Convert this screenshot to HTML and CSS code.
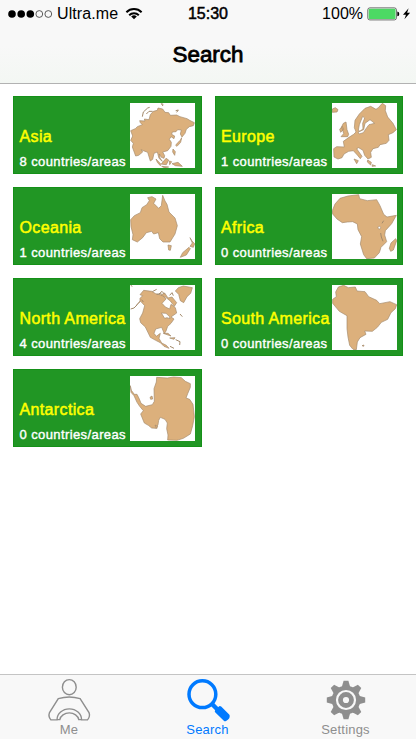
FILE: index.html
```html
<!DOCTYPE html>
<html lang="en">
<head>
<meta charset="utf-8">
<title>Search</title>
<link rel="stylesheet" href="styles.css">
</head>
<body>
<div class="app">
  <header class="top">
    <div class="status">
      <div class="carrier">
        <svg class="signal" width="45" height="10" viewBox="0 0 45 10"><circle cx="4" cy="5" r="3.8"/><circle cx="13.2" cy="5" r="3.8"/><circle cx="22.3" cy="5" r="3.8"/><circle class="off" cx="31.3" cy="5" r="3.4"/><circle class="off" cx="40.3" cy="5" r="3.4"/></svg>
        <span>Ultra.me</span>
        <svg class="wifi" width="18" height="13" viewBox="0 0 18 13"><path d="M1.4 5.2a10.8 10.8 0 0 1 15.2 0M4.2 8.2a6.8 6.8 0 0 1 9.6 0"/><path class="solid" d="M9 12.2 6.2 9.5a4 4 0 0 1 5.6 0z"/></svg>
      </div>
      <div class="clock">15:30</div>
      <div class="power">
        <span>100%</span>
        <svg width="44" height="14" viewBox="0 0 44 14"><rect x=".8" y=".9" width="28.6" height="12" rx="2" fill="#fff" stroke="#444" stroke-width=".8"/><rect x="1.7" y="1.8" width="26.8" height="10.2" rx="1" fill="#4cd964"/><path d="M30.3 4.6q2 .2 2 2.3t-2 2.3z"/><path d="M41.6 1.2 36 7.8h3l-1.6 4.5 5.7-6.5h-3z"/></svg>
      </div>
    </div>
    <h1>Search</h1>
  </header>

  <main class="grid">
    <a class="card">
      <div class="text"><h2>Asia</h2><p>8 countries/areas</p></div>
      <svg class="map" viewBox="0 0 195 195"><path d="M2 83 16 77 22 71 37 65 31 59 29 53 45 54 43 48 57 50 61 35 70 25 82 22 84 15 98 18 105 28 116 29 121 37 140 36 150 41 171 47 179 52 193 59 190 68 178 71 169 79 165 91 156 102 151 93 154 81 143 80 138 86 127 87 125 94 134 99 132 107 123 101 118 109 124 118 123 130 113 143 98 147 104 158 102 166 94 163 88 153 90 165 97 175 87 166 82 147 72 151 68 169 61 174 53 148 40 143 33 140 38 147 26 157 17 159 7 132 10 121 2 112 8 99z"/><path class="line" d="M37 41 40 27 53 15 59 13M49 33 57 25 68 25M99 9 94 2 100 4M137 23 145 21 140 28"/><path d="M143 119 151 112 155 104 152 118 141 130 137 127zM129 138 136 146 134 157 128 147zM78 168 93 184 91 188 82 178zM94 183 108 166 116 171 109 185 98 184zM118 174 125 176 119 185zM126 182 144 178 157 190 136 188zM95 190 116 192 103 194z"/></svg>
    </a>
    <a class="card">
      <div class="text"><h2>Europe</h2><p>1 countries/areas</p></div>
      <svg class="map" viewBox="0 0 195 195"><path d="M67 74 69 52 82 33 99 16 116 10 132 19 139 14 151 1 161 8 160 23 167 42 183 61 193 80 183 89 169 95 171 112 163 121 144 125 139 133 123 137 116 148 118 163 108 168 98 157 93 142 80 134 74 137 90 160 85 167 76 156 64 143 50 145 36 153 30 164 18 168 6 162 5 137 14 131 37 132 34 115 51 103 65 94 72 87 69 79z"/><path d="M27 101 35 92 32 81 28 73 34 61 42 57 45 80 50 94 47 101zM23 79 31 70 35 79 26 88zM1 18 10 14 18 20 15 27 1 28zM66 168 79 173 74 182zM107 171 118 178 116 186 106 177zM121 185 131 189 120 190z"/><path class="water" d="M92 40 98 45 92 61 93 77 84 85 79 82 82 65zM99 61 114 50 128 61 111 65 104 74 94 89 82 93 78 87 95 80z"/></svg>
    </a>
    <a class="card">
      <div class="text"><h2>Oceania</h2><p>1 countries/areas</p></div>
      <svg class="map" viewBox="0 0 195 195"><path d="M2 77 13 65 31 56 36 41 50 32 58 20 53 11 66 8 78 15 71 28 86 43 94 35 98 4 105 21 111 31 117 54 135 72 142 95 135 120 120 144 99 144 89 134 85 116 71 120 65 112 49 116 38 131 22 144 7 137 9 122 3 98z"/><path d="M114 153 124 155 121 169 116 168zM151 190 158 176 177 160 181 164 169 183zM180 157 187 147 180 131 186 141 194 149 190 160z"/></svg>
    </a>
    <a class="card">
      <div class="text"><h2>Africa</h2><p>0 countries/areas</p></div>
      <svg class="map" viewBox="0 0 195 195"><path d="M2 60 1 50 9 30 24 13 48 6 80 2 83 14 106 20 134 17 144 35 155 61 165 69 193 64 179 89 160 110 158 123 164 143 147 160 142 176 127 192 104 194 95 182 85 150 89 128 78 107 76 90 62 83 46 84 31 86 15 75z"/><path d="M172 163 177 147 191 134 194 140 184 168 176 172z"/><circle class="water" cx="142" cy="101" r="4"/><path class="line" d="M150 88 155 80M146 117 148 129 153 142"/></svg>
    </a>
    <a class="card">
      <div class="text"><h2>North America</h2><p>4 countries/areas</p></div>
      <svg class="map" viewBox="0 0 195 195"><path d="M30 40 38 32 30 29 41 16 65 19 77 26 97 31 108 42 96 55 106 66 119 72 123 58 136 68 140 84 123 96 132 102 123 115 113 124 108 138 103 146 95 127 77 132 72 145 79 154 91 145 87 160 95 174 109 181 117 190 102 184 91 173 77 166 61 157 46 126 32 113 29 101 38 84 44 62 32 49 19 61 30 48z"/><path d="M93 30 104 24 114 39 126 36 140 53 133 64 121 48 107 37zM136 18 145 8 160 3 187 8 182 25 171 35 161 53 151 47 146 28zM100 145 114 145 123 153 108 148zM119 159 135 158 132 163z"/><path class="line" d="M2 1 7 4M2 72 12 69 22 59M87 27 96 19 104 28M119 31 126 23 130 32M67 20 80 13M80 28 94 26M35 44 40 51M97 88 107 96 117 99M150 87 157 95M137 164 150 170 149 180M120 184 132 190"/><path class="water" d="M94 84 108 85 118 94 120 101 111 98 104 100z"/></svg>
    </a>
    <a class="card">
      <div class="text"><h2>South America</h2><p>0 countries/areas</p></div>
      <svg class="map" viewBox="0 0 195 195"><path d="M11 21 19 6 35 1 49 8 70 6 75 18 99 20 110 35 134 46 143 56 174 50 194 59 190 71 177 83 167 103 148 112 136 127 121 139 98 138 102 148 84 158 76 171 73 194 63 193 53 181 48 156 45 131 45 92 22 79 2 55 2 43 13 35z"/><path d="M90 182 96 180 95 184z"/></svg>
    </a>
    <a class="card">
      <div class="text"><h2>Antarctica</h2><p>0 countries/areas</p></div>
      <svg class="map" viewBox="0 0 195 195"><path d="M1 29 4 43 13 55 21 55 28 69 33 82 47 91 67 86 73 76 72 38 79 18 80 4 112 6 131 3 154 5 166 16 181 23 181 34 173 53 168 66 179 70 189 85 193 122 188 149 181 174 160 187 141 193 113 192 114 177 110 158 112 141 105 130 91 124 86 133 84 146 78 157 65 156 55 148 43 141 38 129 32 114 40 104 29 91 21 79 12 59 3 49z"/><path d="M60 64 66 60 68 69 62 70zM75 147 83 151 80 158z"/></svg>
    </a>
  </main>

  <nav class="tabs">
    <a class="tab">
      <svg width="44" height="44" viewBox="0 0 44 44" fill="none" stroke="#8e8e8e" stroke-width="1.4"><ellipse cx="22.3" cy="9.2" rx="6.9" ry="7.6"/><path d="M11.3 20.7q11-3.5 21.8 0L42 34.6q1.5 3.5-1.5 7.3h-5.9a12 10.8 0 0 0-24.6 0H4q-3-3-1.5-7.3zM34.4 41.6h-2.6a9.6 7.8 0 0 0-19 0h-2.6"/></svg>
      <span>Me</span>
    </a>
    <a class="tab active">
      <svg width="44" height="44" viewBox="0 0 44 44" fill="none" stroke="#007aff"><circle cx="16.4" cy="16.2" r="13.4" stroke-width="3.5"/><path d="m26 26 6 6" stroke-width="4.4"/><path d="m30.6 33.2 3.3-3.3 8 7.9q.4 1.8-2.8 3.7z" fill="#007aff" stroke-width="3.6" stroke-linejoin="round"/></svg>
      <span>Search</span>
    </a>
    <a class="tab">
      <svg width="44" height="44" viewBox="-22 -22 44 44" fill="#8e8e8e"><g id="teeth"><path id="tooth" d="m-4.2-13 1.8-6.2h4.8L4.2-13v26l-1.8 6.2h-4.8L-4.2 13z"/><use href="#tooth" transform="rotate(45)"/></g><use href="#teeth" transform="rotate(90)"/><circle r="14.3"/><circle r="9" fill="none" stroke="#f8f8f8" stroke-width="2.2"/><circle r="3.1" fill="#f8f8f8"/></svg>
      <span>Settings</span>
    </a>
  </nav>
</div>
</body>
</html>
```
FILE: styles.css
```css
* { box-sizing: border-box; }
body { margin: 0; background: #fff; font-family: "Liberation Sans", Arial, sans-serif; color: #000; }
h1, h2, p { margin: 0; font-weight: 400; }
svg { display: block; flex: none; }
.app { height: 739px; display: flex; flex-direction: column; }
.top { height: 84px; border-bottom: 1px solid #b2b2b2; background: linear-gradient(#f8f8f8 55%, #f3f7f3); }
.status { height: 28px; padding: 0 5px 0 8px; display: grid; grid-template-columns: 1fr auto 1fr; align-items: center; font-size: 16px; line-height: 28px; }
.carrier, .power { display: flex; align-items: center; }
.carrier span { margin-left: 4px; letter-spacing: .1px; }
.off { fill: none; stroke: #333; stroke-width: .8; }
.wifi { margin-left: 7px; margin-top: -2px; }
.wifi path { fill: none; stroke: #000; stroke-width: 2; }
.wifi .solid { fill: #000; stroke: none; }
.clock { -webkit-text-stroke: .5px #000; margin-right: 3px; }
.power { justify-content: flex-end; gap: 4px; }
h1 { text-align: center; font-size: 22.4px; line-height: 54px; -webkit-text-stroke: .8px #000; }
.grid { flex: 1; padding: 12px 13px; display: grid; grid-template-columns: 188.5px 188.5px; grid-auto-rows: 78px; gap: 13px; align-content: start; }
.card { background: #219624; border: 1px solid #159018; padding: 6px 5.5px; display: flex; justify-content: space-between; color: #fff; white-space: nowrap; }
.text { width: 110px; padding-top: 23px; }
h2 { font-size: 16px; line-height: 22px; letter-spacing: .36px; color: #ff0; -webkit-text-stroke: .5px #ff0; }
.card p { font-size: 13px; line-height: 16px; margin-top: 6px; letter-spacing: .4px; -webkit-text-stroke: .4px #fff; }
.map { width: 65px; height: 65px; background: #fff; fill: #dcb07c; stroke: #a38a6b; stroke-width: 2; stroke-linejoin: round; }
.map .line { fill: none; stroke-width: 3; }
.map .water { fill: #fff; }
.tabs { height: 65px; border-top: 1px solid #c4c4c4; background: #f8f8f8; display: grid; grid-template-columns: 138px 138px 138px; }
.tab { display: flex; flex-direction: column; align-items: center; color: #8e8e8e; font-size: 13px; line-height: 15px; }
.tab svg { margin-top: 3px; overflow: visible; }
.tab span { letter-spacing: .2px; }
.tab + .tab { padding-left: 1px; }
.active { color: #007aff; }
```
